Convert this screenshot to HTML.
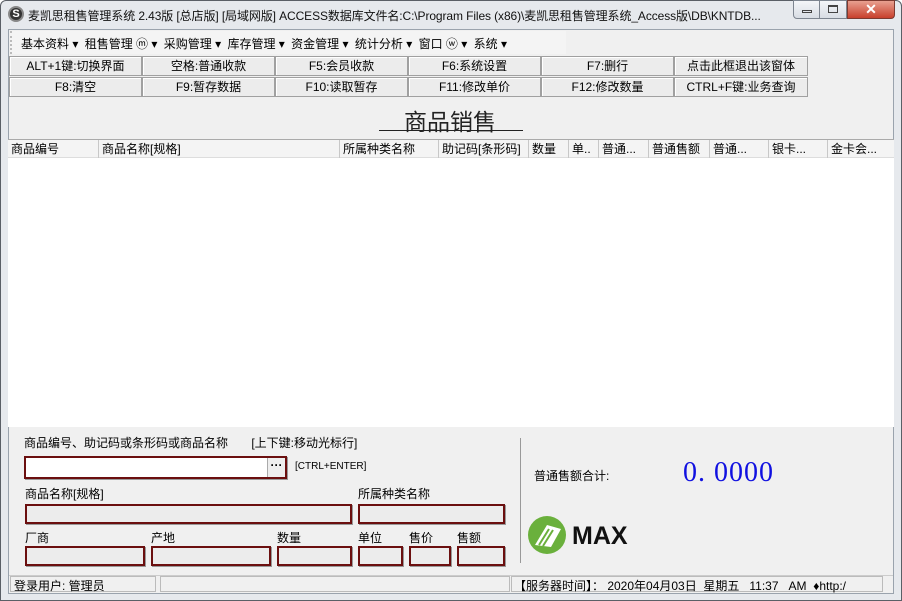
<!DOCTYPE html>
<html><head><meta charset="utf-8"><style>
*{margin:0;padding:0;box-sizing:border-box}
body{width:902px;height:601px;background:#fff;position:relative;overflow:hidden;font:12px "Liberation Sans","Noto Sans CJK SC",sans-serif;color:#000}
.a{position:absolute}
.win{left:0;top:0;width:902px;height:601px;background:#e6e9ed;border:1px solid #5a5f66;border-radius:6px 6px 0 0}
.client{left:8px;top:29px;width:886px;height:565px;background:#f0f0f0;border:1px solid #9aa3ad}
.btn{position:absolute;height:20px;border:1px solid #a0a0a0;background:#ececec;text-align:center;line-height:18px;font-size:12px;box-shadow:inset 1px 1px 0 #fff}
.hd{position:absolute;top:0;height:18px;line-height:18px;padding-left:3px;border-left:1px solid #c8c8c8;white-space:nowrap;overflow:hidden}
.box{position:absolute;height:20px;border:2px solid #6b0f0f;background:#ececec;box-shadow:1px 1px 0 #999}
.lbl{position:absolute;white-space:nowrap}
</style></head><body>
<div class="a win"></div>
<div class="a" style="left:8px;top:6px;width:16px;height:16px;border-radius:50%;background:#333;border:2px solid #888;color:#fff;font-size:11px;line-height:12px;text-align:center;font-weight:bold">S</div>
<div class="lbl" style="left:28px;top:7px;font-size:12px;letter-spacing:-0.1px;color:#111">麦凯思租售管理系统 2.43版 [总店版] [局域网版] ACCESS数据库文件名:C:\Program Files (x86)\麦凯思租售管理系统_Access版\DB\KNTDB...</div>
<div class="a" style="left:793px;top:0;width:27px;height:19px;background:linear-gradient(#f4f6f9,#d8dde4);border:1px solid #7d8590;border-radius:0 0 0 4px"><div class="a" style="left:8px;top:9px;width:10px;height:3px;border:1px solid #444"></div></div>
<div class="a" style="left:820px;top:0;width:27px;height:19px;background:linear-gradient(#f4f6f9,#d8dde4);border:1px solid #7d8590;border-left:0"><div class="a" style="left:8px;top:4px;width:10px;height:8px;border:1px solid #444;border-top-width:2px"></div></div>
<div class="a" style="left:847px;top:0;width:48px;height:19px;background:linear-gradient(#e8a090,#c8402c);border:1px solid #7d3a30;border-radius:0 0 4px 0;color:#fff;font-weight:bold;text-align:center;line-height:17px;font-size:14px">✕</div>
<div class="a client"></div>
<div class="a" style="left:10px;top:31px;width:556px;height:23px;background:#f4f4f4;border-left:2px dotted #bbb"></div>
<div class="lbl" style="left:21px;top:35px">基本资料 ▾ <span style="margin-left:3px">租售管理 ⓜ ▾</span> <span style="margin-left:3px">采购管理 ▾</span> <span style="margin-left:3px">库存管理 ▾</span> <span style="margin-left:3px">资金管理 ▾</span> <span style="margin-left:3px">统计分析 ▾</span> <span style="margin-left:3px">窗口 ⓦ ▾</span> <span style="margin-left:3px">系统 ▾</span></div>
<div class="btn" style="left:9px;top:56px;width:133px">ALT+1键:切换界面</div>
<div class="btn" style="left:142px;top:56px;width:133px">空格:普通收款</div>
<div class="btn" style="left:275px;top:56px;width:133px">F5:会员收款</div>
<div class="btn" style="left:408px;top:56px;width:133px">F6:系统设置</div>
<div class="btn" style="left:541px;top:56px;width:133px">F7:删行</div>
<div class="btn" style="left:674px;top:56px;width:134px">点击此框退出该窗体</div>
<div class="btn" style="left:9px;top:77px;width:133px">F8:清空</div>
<div class="btn" style="left:142px;top:77px;width:133px">F9:暂存数据</div>
<div class="btn" style="left:275px;top:77px;width:133px">F10:读取暂存</div>
<div class="btn" style="left:408px;top:77px;width:133px">F11:修改单价</div>
<div class="btn" style="left:541px;top:77px;width:133px">F12:修改数量</div>
<div class="btn" style="left:674px;top:77px;width:134px">CTRL+F键:业务查询</div>
<div class="lbl" style="left:404px;top:103px;font-size:23px;color:#222;letter-spacing:0px">商品销售</div>
<div class="a" style="left:379px;top:130px;width:144px;height:1px;background:#222"></div>
<div class="a" style="left:8px;top:139px;width:886px;height:288px;background:#fff;border-top:1px solid #aaa"></div>
<div class="a" style="left:8px;top:140px;width:886px;height:18px;background:#f4f4f4;border-bottom:1px solid #ddd">
<div class="hd" style="left:0;width:90px;border-left:0">商品编号</div>
<div class="hd" style="left:90px;width:241px">商品名称[规格]</div>
<div class="hd" style="left:331px;width:99px">所属种类名称</div>
<div class="hd" style="left:430px;width:90px">助记码[条形码]</div>
<div class="hd" style="left:520px;width:40px">数量</div>
<div class="hd" style="left:560px;width:30px">单..</div>
<div class="hd" style="left:590px;width:50px">普通...</div>
<div class="hd" style="left:640px;width:61px">普通售额</div>
<div class="hd" style="left:701px;width:59px">普通...</div>
<div class="hd" style="left:760px;width:59px">银卡...</div>
<div class="hd" style="left:819px;width:66px">金卡会...</div>
</div>
<div class="lbl" style="left:24px;top:434px">商品编号、助记码或条形码或商品名称 <span style="margin-left:20px">[上下键:移动光标行]</span></div>
<div class="a" style="left:24px;top:456px;width:263px;height:23px;border:2px solid #6b0f0f;background:#fff;box-shadow:1px 1px 0 #999"><div class="a" style="right:0;top:0;width:18px;height:19px;background:#eee;border-left:1px solid #aaa;text-align:center;line-height:14px;font-weight:bold">···</div></div>
<div class="lbl" style="left:295px;top:461px;font-size:10px">[CTRL+ENTER]</div>
<div class="lbl" style="left:25px;top:485px">商品名称[规格]</div>
<div class="lbl" style="left:358px;top:485px">所属种类名称</div>
<div class="box" style="left:25px;top:504px;width:327px"></div>
<div class="box" style="left:358px;top:504px;width:147px"></div>
<div class="lbl" style="left:25px;top:529px">厂商</div>
<div class="lbl" style="left:151px;top:529px">产地</div>
<div class="lbl" style="left:277px;top:529px">数量</div>
<div class="lbl" style="left:358px;top:529px">单位</div>
<div class="lbl" style="left:409px;top:529px">售价</div>
<div class="lbl" style="left:457px;top:529px">售额</div>
<div class="box" style="left:25px;top:546px;width:120px"></div>
<div class="box" style="left:151px;top:546px;width:120px"></div>
<div class="box" style="left:277px;top:546px;width:75px"></div>
<div class="box" style="left:358px;top:546px;width:45px"></div>
<div class="box" style="left:409px;top:546px;width:42px"></div>
<div class="box" style="left:457px;top:546px;width:48px"></div>
<div class="a" style="left:520px;top:438px;width:1px;height:125px;background:#999"></div>
<div class="lbl" style="left:534px;top:467px">普通售额合计:</div>
<div class="lbl" style="left:683px;top:457px;font-size:28px;color:#1010e0;font-family:'Liberation Serif',serif;letter-spacing:1px">0. 0000</div>
<svg class="a" style="left:527px;top:515px" width="40" height="40" viewBox="0 0 40 40"><circle cx="20" cy="20" r="19" fill="#6ab03c"/><path d="M8 30 L20 10 L34 14 L24 32 Z" fill="#fff"/><path d="M12 30 L22 14 M16 31 L26 15" stroke="#6ab03c" stroke-width="2"/></svg>
<div class="lbl" style="left:572px;top:522px;font-size:25px;font-weight:900;color:#111">MAX</div>
<div class="a" style="left:9px;top:575px;width:884px;height:18px;background:#f0f0f0;border-top:1px solid #ccc"></div>
<div class="a" style="left:10px;top:576px;width:146px;height:16px;border:1px solid #bbb"></div>
<div class="a" style="left:160px;top:576px;width:350px;height:16px;border:1px solid #bbb"></div>
<div class="a" style="left:511px;top:576px;width:372px;height:16px;border:1px solid #bbb"></div>
<div class="lbl" style="left:14px;top:577px">登录用户: 管理员</div>
<div class="lbl" style="left:514px;top:577px">【服务器时间】： 2020年04月03日 &nbsp;星期五 &nbsp; 11:37 &nbsp; AM &nbsp;♦http:/</div>
</body></html>
